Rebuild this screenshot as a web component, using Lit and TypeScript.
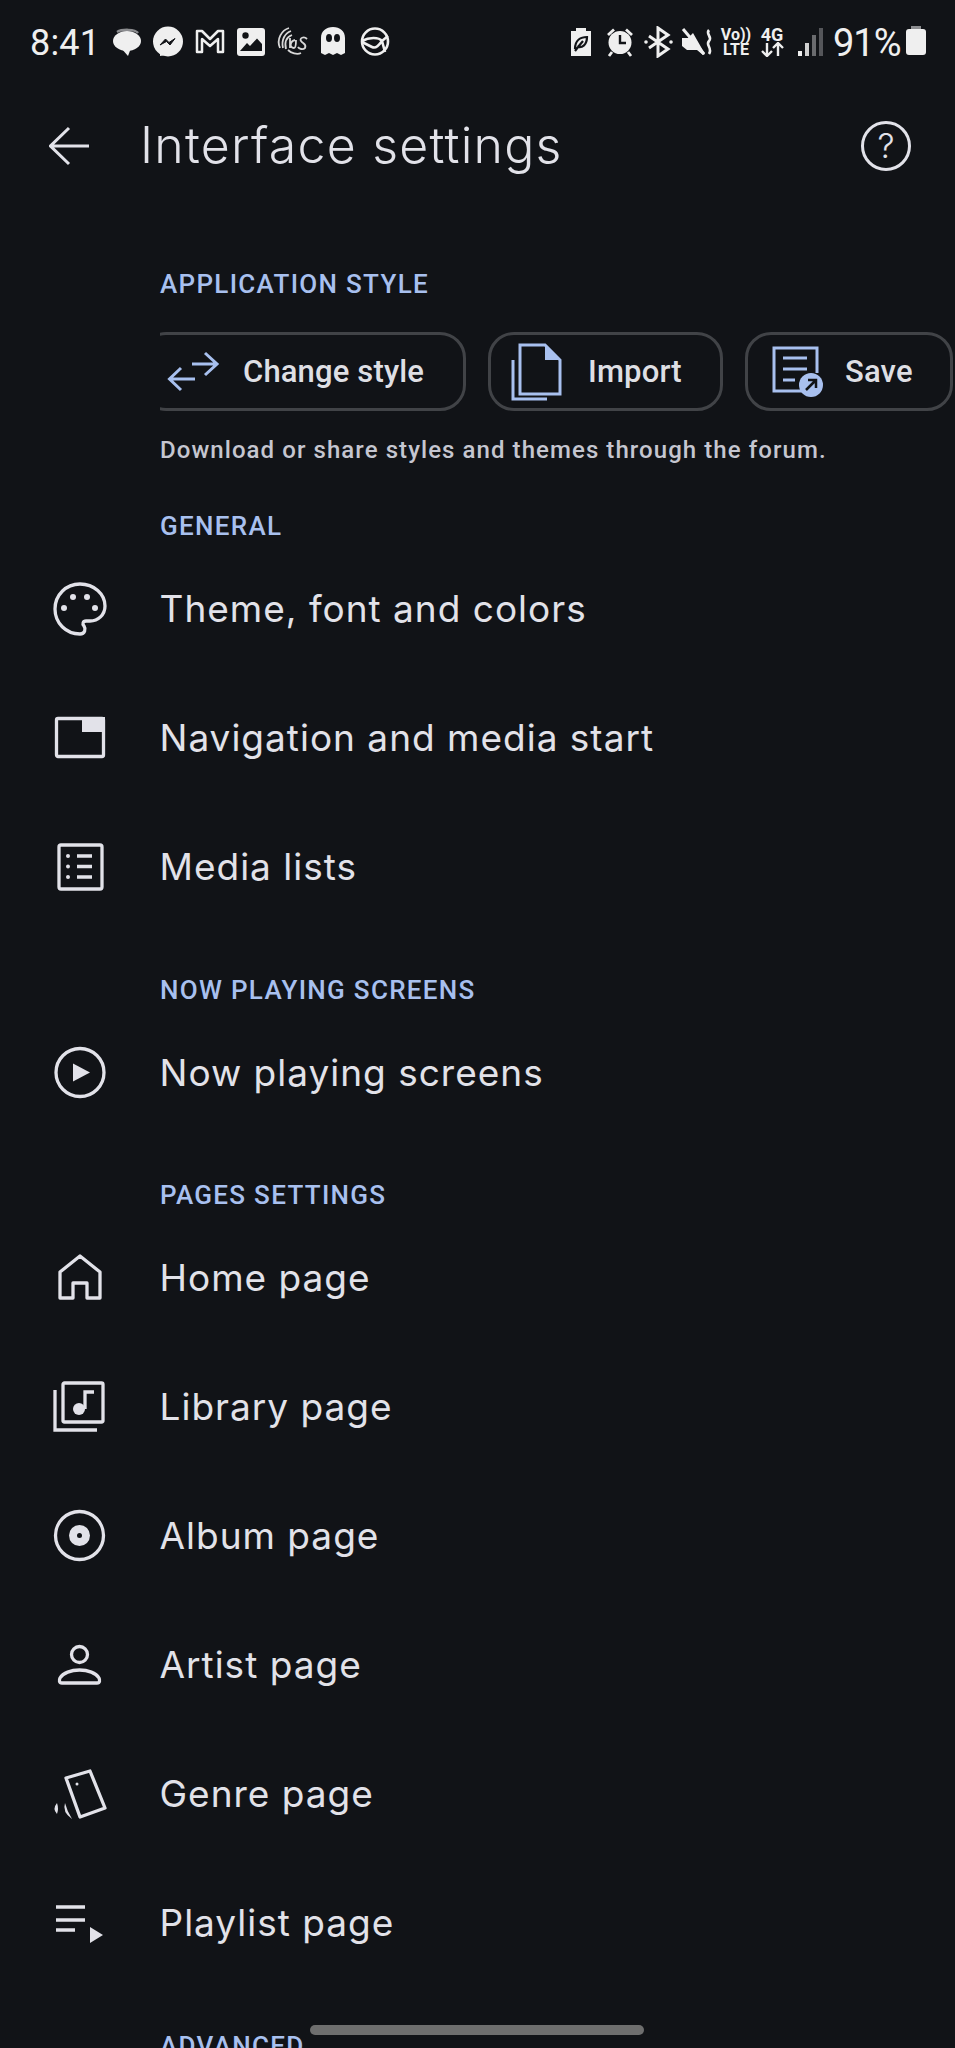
import { LitElement, html, css, svg } from "lit";
import { customElement } from "lit/decorators.js";

const BG = "#111317";

const listIcons: Record<string, unknown> = {
  palette: svg`<path d="M30 55C16 55 5 44 5 30C5 16 16 5 30 5C44 5 55 15 55 27C55 36 48 42 40 42H36C33 42 32 45 34 47C36 50 35 55 30 55Z"/><g class="f"><circle cx="14" cy="29" r="3"/><circle cx="23" cy="18" r="3"/><circle cx="37" cy="18" r="3"/><circle cx="45" cy="29" r="3"/></g>`,
  nav: svg`<rect x="6.5" y="10.5" width="47" height="38" rx="1.5"/><rect class="f" x="32" y="9" width="23" height="15"/>`,
  lists: svg`<rect x="9" y="8" width="43" height="44" rx="2"/><g class="f"><circle cx="18" cy="19" r="2"/><circle cx="18" cy="29.5" r="2"/><circle cx="18" cy="40" r="2"/></g><path d="M27 19H42M27 29.5H42M27 40H42"/>`,
  play: svg`<circle cx="30" cy="29.5" r="24"/><path class="f" d="M23 20.5L40 29.5L23 38.5Z"/>`,
  home: svg`<path d="M10 50V24L30 8L50 24V50H37V35H23V50Z" stroke-linejoin="round"/>`,
  library: svg`<rect x="13" y="6" width="40" height="39" rx="1.5"/><path d="M5 13V53H47"/><circle class="f" cx="29" cy="32" r="6"/><path d="M35 32V15H44"/>`,
  album: svg`<circle cx="29.5" cy="29.5" r="24"/><circle class="f" cx="29.5" cy="29.5" r="10.5"/><circle cx="29.5" cy="29.5" r="2.5" style="fill:${BG};stroke:none"/>`,
  artist: svg`<circle cx="29.5" cy="19.5" r="8"/><path d="M12 48H47C50 48 50 45 49 43C46 38 38 35 29.5 35C21 35 13 38 10 43C9 45 9 48 12 48Z"/>`,
  genre: svg`<path d="M16 14L40 7L55 44L30 53Z" stroke-linejoin="round"/><circle class="f" cx="27" cy="20" r="1.5"/><path class="f" d="M7 39Q2 45 7 50Q9 45 7 39ZM15 39Q12 48 22 55Q17 47 15 39Z"/>`,
  playlist: svg`<path d="M6 14H35M6 27H35M6 37H25"/><path class="f" d="M40 34L53 42L40 50Z"/>`,
};

const statusLeft = [
  svg`<path d="M6 6C11 3 24 3 27 7" fill="none" stroke="#8c8d90" stroke-width="2.5"/><ellipse cx="16" cy="15" rx="14" ry="10" fill="#efefef"/><path d="M10 22L17 30L20 22Z" fill="#efefef"/>`,
  svg`<circle cx="16" cy="15.500" r="15" fill="#efefef"/><path d="M8 30L8 23L14 29Z" fill="#efefef"/><path d="M8 19L13.500 13L17 16.500L23 12.500L18 19L14.500 15.500Z" fill="${BG}" stroke="${BG}"/>`,
  svg`<path d="M3 26V5H8L16 13L24 5H29V26H24V13L16 20L8 13V26Z" fill="none" stroke="#efefef" stroke-width="2.500" stroke-linejoin="round"/>`,
  svg`<rect x="2" y="2" width="28" height="28" rx="3" fill="#efefef"/><circle cx="10.500" cy="9.500" r="3.200" fill="${BG}"/><path d="M5 25L12 17L15 20L22 12.500L27 18V25Z" fill="${BG}"/>`,
  svg`<g fill="none" stroke="#d8d8d8" stroke-width="1.800"><path d="M4 22C0 13 6 4 13 2M7 22C5 14 9 7 15 5M10 23C8 15 11 11 16 9"/><path d="M12 24C15 27 21 29 25 27"/><path d="M14 12L14 22M19 14C14 15 13 22 18 22C20 22 20 18 20 14"/><path d="M31 13C28 10 23 12 25 15C27 18 31 18 29 22C27 24 23 23 22 21"/></g>`,
  svg`<path d="M4 27V12C4 5 9 1 16 1C23 1 28 5 28 12V27L24 29L20 27L16 29L12 27L8 29Z" fill="#efefef"/><ellipse cx="12" cy="12" rx="3" ry="4" fill="${BG}"/><ellipse cx="20" cy="12" rx="3" ry="4" fill="${BG}"/>`,
  svg`<g fill="none" stroke="#efefef" stroke-width="2.600"><circle cx="16" cy="15.500" r="13"/><path d="M3 15C10 11 20 11 23 15L29 10M23 15L26 26M3 16L13 21C17 23 20 19 23 15"/></g>`,
];

const statusRight = [
  svg`<path d="M12 2H22V5H27V30H7V5H12Z" fill="#efefef"/><path d="M11 23C11 14 17 11 23 11C23 19 18 22 14 21L11 25M14 21L19 15" fill="none" stroke="${BG}" stroke-width="2.200"/>`,
  svg`<circle cx="17" cy="16.500" r="11.500" fill="#efefef"/><path d="M17 9V17H23" fill="none" stroke="${BG}" stroke-width="2.400"/><path d="M5 9L11 3.500M29 9L23 3.500M9 26L6 30M25 26L28 30" fill="none" stroke="#efefef" stroke-width="2.800"/>`,
  svg`<path d="M8 10L27 23L17 30V2L27 9L8 22" fill="none" stroke="#efefef" stroke-width="3"/><circle cx="5" cy="16" r="1.800" fill="#efefef"/><circle cx="30" cy="16" r="1.800" fill="#efefef"/>`,
  svg`<path d="M2 12H8L13 7L25 28L23 29L17 24H7L2 20Z" fill="#efefef"/><path d="M3 3L24 28" stroke="#efefef" stroke-width="3"/><path d="M29 4C25 8 33 11 29 15C25 19 33 22 29 28" fill="none" stroke="#efefef" stroke-width="2.600"/>`,
];

@customElement("app-root")
export class AppRoot extends LitElement {
  static styles = css`
    :host { display: block; width: 955px; height: 2048px; overflow: hidden; position: relative; background: #111317; color: #e2e2e9; font-family: Inter, "Liberation Sans", sans-serif; }
    .status { height: 84px; display: flex; align-items: center; padding: 0 29px 0 30px; box-sizing: border-box; color: #efefef; }
    .time { font-family: Roboto, sans-serif; font-size: 36px; font-weight: 400; letter-spacing: 0.2px; width: 81px; margin-top: 1px; }
    .sleft { display: flex; gap: 9.300px; }
    .sleft svg { width: 32px; height: 32px; }
    .sright { display: flex; align-items: center; margin-left: auto; }
    .sright svg { width: 34px; height: 32px; margin-right: 4.500px; }
    .volte, .fourg { font-family: Roboto, sans-serif; font-weight: 700; text-align: center; color: #efefef; flex: none; }
    .volte { font-size: 16px; line-height: 15px; width: 36px; }
    .fourg { font-size: 18px; line-height: 15px; width: 36px; display: flex; flex-direction: column; align-items: center; }
    .volte span { display: block; }
    .sright .arrows { width: 24px; height: 15px; margin: 0; fill: none; stroke: #efefef; stroke-width: 2.400; }
    .sright .sig { width: 26px; margin: 0 9.500px 0 7.500px; }
    .pct { font-family: Roboto, sans-serif; font-size: 38px; font-weight: 400; width: 73px; margin-top: 1px; letter-spacing: -1px; }
    .batt { width: 20px; height: 26px; background: #efefef; border-radius: 3px; position: relative; }
    .batt::before { content: ""; position: absolute; left: 5px; top: -3px; width: 10px; height: 3px; background: #8c8d90; }

    .header { height: 124px; display: flex; align-items: center; padding: 0 44px 0 49px; box-sizing: border-box; }
    .back { width: 40px; height: 40px; margin-right: 51px; flex: none; }
    .back path { fill: none; stroke: #e2e2e9; stroke-width: 3; }
    .title { flex: 1; font-size: 50px; font-weight: 300; letter-spacing: 1.250px; line-height: 60px; margin-top: -2px; white-space: nowrap; }
    .help { width: 50px; height: 50px; border: 3px solid #e2e2e9; border-radius: 50%; box-sizing: border-box; display: flex; align-items: center; justify-content: center; font-size: 34px; font-weight: 300; line-height: 1; flex: none; }

    .label { height: 36px; line-height: 40px; padding-left: 160px; font-family: Roboto, sans-serif; font-weight: 500; font-size: 26px; letter-spacing: 1.300px; color: #a8c0ef; margin-top: 38px; white-space: nowrap; }
    .label.first { margin-top: 57px; line-height: 38px; }

    .scroller { margin: 31px 0 0 160px; display: flex; gap: 22px; overflow: hidden; height: 79px; }
    .chip { flex: none; height: 79px; box-sizing: border-box; border: 3px solid #414347; border-radius: 26px; display: flex; align-items: center; font-family: Roboto, sans-serif; font-weight: 500; font-size: 31px; letter-spacing: 0.150px; color: #dedfe4; white-space: nowrap; }
    .chip svg { flex: none; fill: none; stroke: #a8c0ef; stroke-width: 3; }
    .chip .fb { fill: #a8c0ef; stroke: none; }
    .c1 { margin-left: -20px; width: 326px; padding-left: 23px; }
    .c1 svg { width: 54px; height: 52px; margin-right: 23px; }
    .c2 { width: 235px; padding-left: 19px; }
    .c2 svg { width: 54px; height: 60px; margin-right: 24px; }
    .c3 { width: 208px; padding-left: 22px; }
    .c3 svg { width: 58px; height: 58px; margin-right: 17px; }

    .note { margin-top: 20px; padding-bottom: 1px; height: 36px; line-height: 38px; padding-left: 160px; font-family: Roboto, sans-serif; font-weight: 500; font-size: 24px; letter-spacing: 1.070px; color: #c5c6d0; white-space: nowrap; }

    .rows { margin-top: 2.500px; }
    .row { height: 129px; display: flex; align-items: center; padding-left: 50px; }
    .row svg { width: 60px; height: 60px; flex: none; margin-right: 49.500px; fill: none; stroke: #e2e2e9; stroke-width: 3.300; }
    .row svg .f { fill: #e2e2e9; stroke: none; }
    .row span { font-size: 37px; letter-spacing: 1px; line-height: 44px; white-space: nowrap; }

    .gesture { position: absolute; left: 310px; top: 2025px; width: 334px; height: 10px; border-radius: 5px; background: #6e6e6e; }
  `;

  private row(icon: string, text: string) {
    return html`<div class="row"><svg viewBox="0 0 60 60">${listIcons[icon]}</svg><span>${text}</span></div>`;
  }

  render() {
    return html`
      <div class="status">
        <div class="time">8:41</div>
        <div class="sleft">${statusLeft.map((s) => html`<svg viewBox="0 0 32 32">${s}</svg>`)}</div>
        <div class="sright">
          ${statusRight.map((s) => html`<svg viewBox="0 0 34 32">${s}</svg>`)}
          <div class="volte"><span>Vo))</span><span>LTE</span></div>
          <div class="fourg"><span>4G</span><svg class="arrows" viewBox="0 0 24 15"><path d="M7 1V14M2 9L7 14L12 9M18 14V1M13 6L18 1L23 6"/></svg></div>
          <svg class="sig" viewBox="0 0 26 32"><rect x="0" y="25" width="4" height="5" fill="#efefef"/><rect x="7" y="17" width="4" height="13" fill="#d0d0d0"/><rect x="14" y="9" width="4" height="21" fill="#6a6b6e"/><rect x="21" y="2" width="4" height="28" fill="#55565a"/></svg>
          <div class="pct">91%</div>
          <div class="batt"></div>
        </div>
      </div>

      <div class="header">
        <svg class="back" viewBox="0 0 40 40"><path d="M40 20H2M20 2L1.500 20L20 38"/></svg>
        <div class="title">Interface settings</div>
        <div class="help">?</div>
      </div>

      <div class="label first">APPLICATION STYLE</div>
      <div class="scroller">
        <div class="chip c1">
          <svg viewBox="0 0 54 52"><path d="M26 18H51M39 7L51 18L39 29M29 33H4M15 22L3.500 33L15 44"/></svg>
          Change style
        </div>
        <div class="chip c2">
          <svg viewBox="0 0 54 60"><path d="M10 3H35L50 18V52H10Z"/><path class="fb" d="M35 3L50 18H35Z"/><path d="M3 18V57H37"/></svg>
          Import
        </div>
        <div class="chip c3">
          <svg viewBox="0 0 58 58"><path d="M32 48H4V5H47V30"/><path d="M13 15H37M13 26H37M13 37H25"/><circle class="fb" cx="41" cy="42" r="12"/><path d="M36 47L46 37M38 37H46V45" style="stroke:#111317;stroke-width:2.500"/></svg>
          Save
        </div>
      </div>
      <div class="note">Download or share styles and themes through the forum.</div>

      <div class="label">GENERAL</div>
      <div class="rows">
        ${this.row("palette", "Theme, font and colors")}
        ${this.row("nav", "Navigation and media start")}
        ${this.row("lists", "Media lists")}
      </div>

      <div class="label">NOW PLAYING SCREENS</div>
      <div class="rows">${this.row("play", "Now playing screens")}</div>

      <div class="label">PAGES SETTINGS</div>
      <div class="rows">
        ${this.row("home", "Home page")}
        ${this.row("library", "Library page")}
        ${this.row("album", "Album page")}
        ${this.row("artist", "Artist page")}
        ${this.row("genre", "Genre page")}
        ${this.row("playlist", "Playlist page")}
      </div>

      <div class="label">ADVANCED</div>
      <div class="gesture"></div>
    `;
  }
}
